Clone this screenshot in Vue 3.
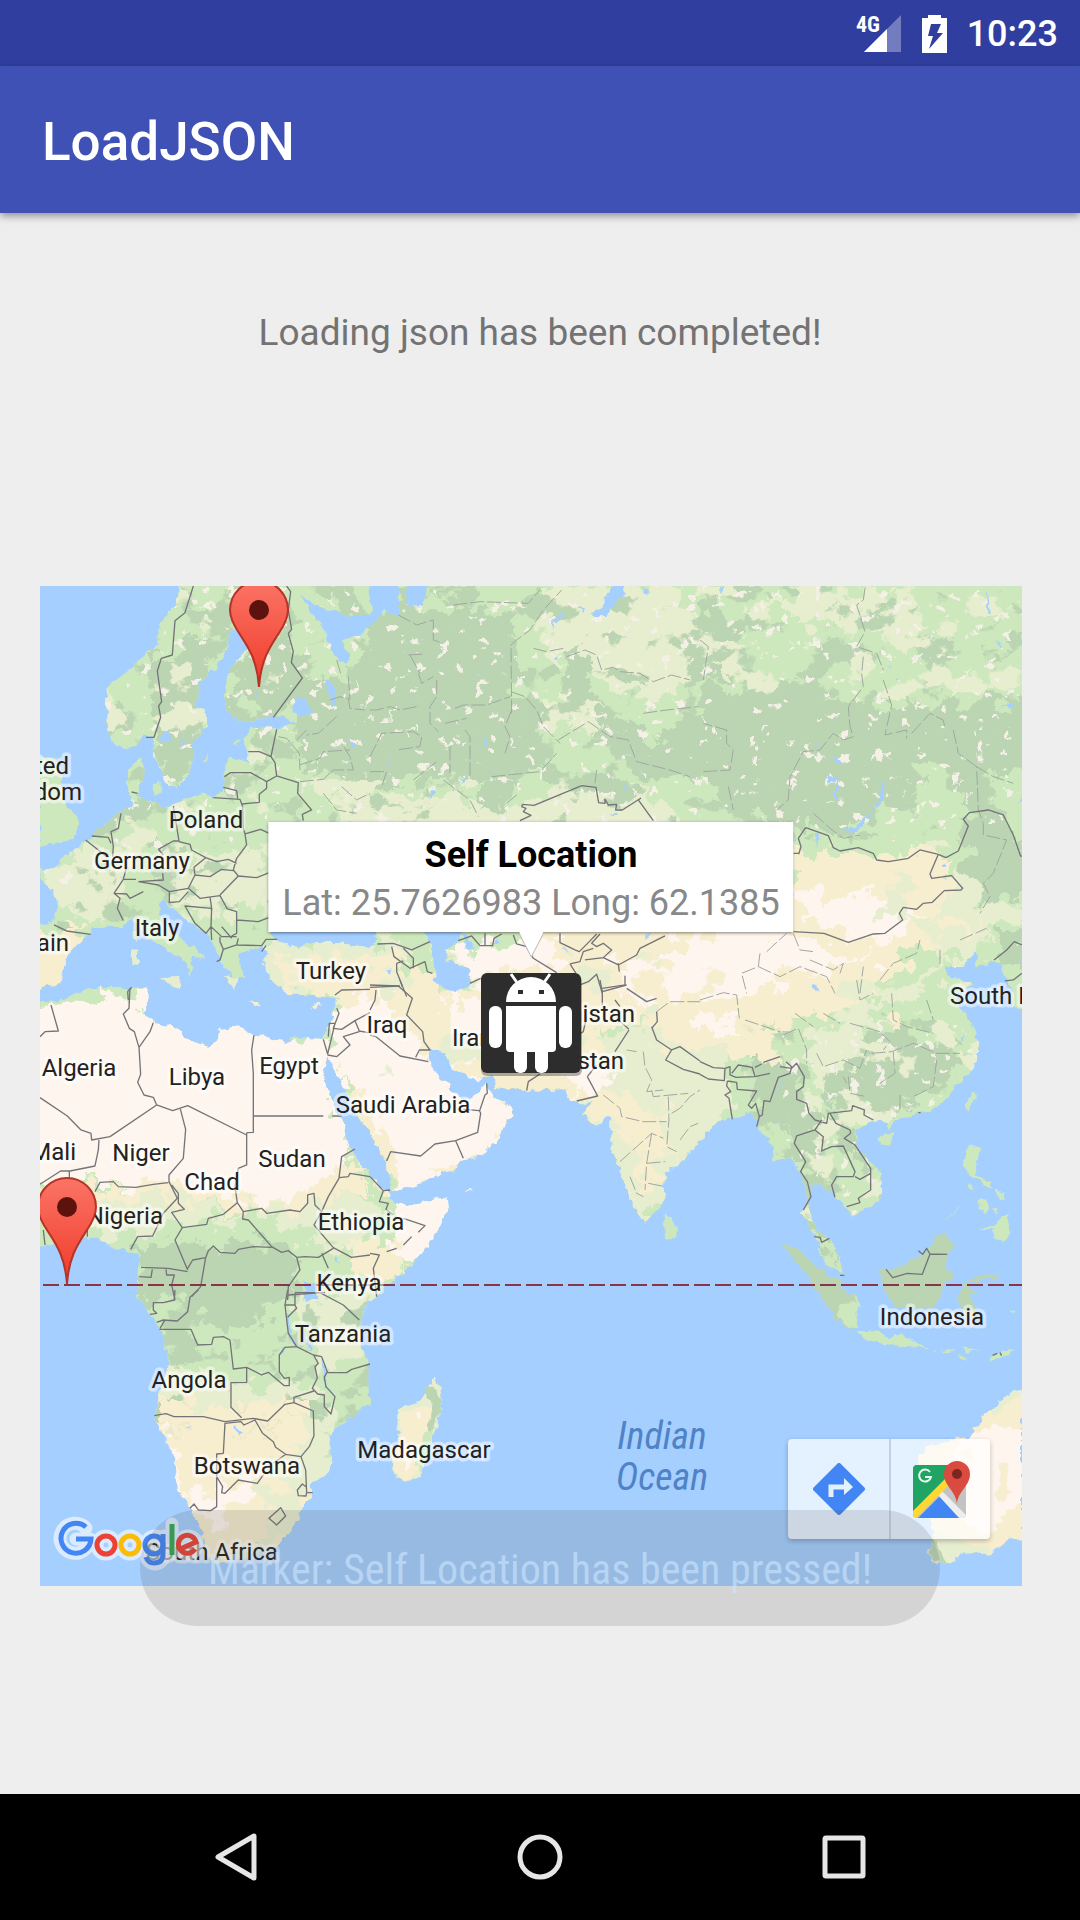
<script setup>
const eurasia = 'M178,580 177,603 160,623 157,643 133,667 107,687 106,697 108,727 110,742 123,749 137,745 145,735 153,740 155,760 163,773 165,783 175,787 187,777 193,760 193,740 207,727 207,713 197,707 198,683 217,667 227,650 229,633 240,625 262,630 243,653 227,673 225,710 240,723 270,717 283,715 295,723 280,727 253,728 243,737 247,747 248,763 237,760 230,757 223,770 225,787 213,798 200,793 183,800 170,807 150,802 138,795 140,787 145,767 142,757 128,770 128,787 133,807 118,810 110,820 95,833 83,843 60,860 55,870 40,868 40,878 57,897 58,910 53,923 30,925 30,992 58,983 70,950 90,935 93,927 122,927 132,917 137,927 153,943 173,953 187,963 188,977 193,967 192,957 205,958 183,940 168,927 158,913 163,900 173,908 183,917 207,933 215,947 220,963 233,977 245,977 237,957 247,950 262,948 270,953 263,960 270,980 287,993 317,995 335,998 333,1017 323,1038 328,1057 340,1080 360,1120 370,1133 380,1150 387,1167 392,1190 407,1188 457,1168 458,1160 477,1157 500,1138 502,1128 513,1115 507,1103 492,1097 487,1083 478,1093 470,1100 450,1093 450,1083 440,1080 427,1060 430,1050 440,1050 452,1067 477,1080 492,1075 495,1087 527,1091 565,1089 570,1100 583,1105 593,1102 583,1115 597,1127 607,1115 610,1120 612,1147 620,1170 633,1207 645,1224 663,1203 665,1173 680,1163 700,1140 718,1120 743,1117 753,1113 760,1130 773,1147 772,1163 790,1157 800,1170 808,1200 802,1213 817,1240 823,1260 843,1275 838,1250 828,1237 817,1230 810,1213 810,1193 812,1183 823,1187 833,1193 848,1210 852,1218 863,1210 882,1197 882,1173 857,1147 855,1133 873,1120 887,1120 890,1130 893,1122 940,1107 960,1083 977,1063 977,1033 963,1010 955,995 975,985 947,975 947,967 962,967 975,950 978,957 975,968 990,962 1002,963 1003,975 1012,988 1013,1008 1030,1005 1030,580Z'
const africa = 'M30,1005 60,1000 90,988 127,988 147,987 148,1005 143,1013 155,1023 178,1028 185,1038 207,1047 217,1040 218,1030 240,1027 253,1035 287,1042 307,1037 323,1038 328,1058 323,1077 333,1103 343,1123 347,1143 360,1163 370,1176 387,1193 395,1205 407,1205 447,1197 449,1207 437,1233 410,1267 387,1287 377,1295 368,1303 360,1320 362,1350 368,1363 369,1403 347,1420 327,1437 332,1457 330,1473 312,1483 312,1493 290,1533 270,1550 240,1560 213,1562 205,1553 203,1533 192,1510 178,1490 175,1457 160,1430 155,1417 160,1390 168,1370 167,1350 158,1327 150,1313 137,1298 137,1287 140,1263 137,1255 123,1248 112,1250 103,1240 87,1237 47,1245 30,1247Z'

// Painted in order, each over the one before it
const biomes = [
  { c: '#bbd5b3', d: 'M160,660 200,640 215,670 195,700 205,730 190,775 160,780 150,730 155,690Z M235,660 275,630 300,650 325,690 370,650 370,615 415,600 515,610 512,690 545,710 545,755 520,775 500,830 480,825 470,775 370,785 330,775 300,760 290,710 240,705Z M565,640 600,660 590,690 620,720 660,740 710,690 800,680 850,705 1030,700 1030,760 960,790 930,760 870,820 830,840 770,820 720,800 690,770 640,780 600,735 570,720Z M700,600 740,620 735,670 710,690 690,650Z' },
  { c: '#bbd5b3', d: 'M960,820 1000,810 1030,860 1030,900 990,900 965,890Z M750,1060 790,1060 810,1100 850,1120 880,1180 850,1150 820,1130 830,1260 845,1275 800,1210 795,1150 765,1110Z M830,1040 900,1020 920,1050 960,1040 950,1080 890,1110 840,1110 820,1080Z M990,960 1005,930 1030,940 1030,970Z M137,1250 200,1240 290,1245 298,1262 285,1300 260,1320 225,1330 190,1300 137,1300Z' },
  { c: '#e7eecf', d: 'M530,590 680,586 700,640 760,650 700,680 660,700 610,690 580,650 545,660Z M540,700 600,705 590,730 550,720Z M760,600 900,590 925,620 900,650 860,620 800,620Z M400,790 470,800 510,820 560,780 650,790 700,830 700,880 380,880 330,800Z M150,860 210,850 270,860 270,900 200,920 160,880Z' },
  { c: '#e7eecf', d: 'M60,860 130,850 120,900 90,925 60,900Z M260,945 330,940 400,940 400,1000 260,1000Z M560,1040 680,1020 740,1060 720,1130 650,1230 600,1150 570,1110Z M960,860 920,940 960,960 900,1010 860,1000 800,1050 820,1110 850,1060 880,1000 1000,930Z M30,1220 100,1195 165,1190 235,1215 320,1180 350,1190 370,1200 370,1260 330,1250 260,1212 180,1230 100,1240Z M150,1360 240,1390 300,1380 330,1420 345,1500 300,1540 270,1560 150,1500Z M300,1290 370,1290 370,1350 320,1370 300,1330Z' },
  { c: '#f7edcf', d: 'M30,930 90,930 60,990 30,990Z M275,955 400,955 440,990 560,960 600,1000 600,1110 540,1100 380,1040 340,1000 290,990Z M790,850 870,850 940,850 955,880 930,920 990,920 900,960 860,1010 770,1020 780,1060 740,1060 690,1050 640,1020 600,1020 560,1030 520,900 790,900Z M590,1090 640,1100 650,1130 630,1190 650,1180 640,1150 600,1120Z M30,1185 100,1190 165,1175 230,1195 320,1170 350,1150 360,1190 330,1200 300,1205 240,1210 165,1195 60,1210Z M350,1240 410,1240 400,1280 370,1290 350,1270Z M155,1395 190,1410 300,1400 310,1440 250,1470 270,1500 255,1560 200,1560 150,1420Z M340,1160 370,1165 370,1190Z M330,1040 400,1040 520,1090 520,1140 400,1210 360,1130Z' },
  { c: '#fef5ee', d: 'M30,1012 150,995 340,1035 340,1090 350,1160 310,1190 260,1205 230,1195 165,1180 100,1185 30,1180Z M325,1015 375,990 430,1050 510,1100 510,1140 400,1190 380,1130 345,1080Z M395,1180 470,1180 450,1230 410,1262 390,1235Z M440,950 560,940 560,965 520,975 470,985 450,960Z M600,970 700,935 780,930 870,965 890,890 900,930 860,960 790,990 700,995 640,1010Z M790,890 860,895 930,915 880,940 800,920Z M690,1010 740,1025 735,1035 690,1030Z M440,1000 490,1000 500,1050 450,1050Z M560,1070 610,1070 600,1095 570,1090Z M150,1415 175,1440 190,1500 160,1490Z M215,1480 260,1480 215,1530 190,1500Z' },
]

const tiles = [
  {
    x: 40, y: 580,
    land: [['#cee8bd', 'M0,530 50,535 65,600 80,680 112,710 115,740 100,780 40,790 0,798Z M335,610 358,605 360,640 345,645Z M580,490 602,480 590,500Z M488,545 505,515 500,545Z M275,1055 295,1050 290,1085Z'], ['#e7eecf', 'M360,1195 422,1190 415,1228Z M270,1110 295,1105 293,1158 275,1155Z M555,1190 590,1190 582,1232Z']],
    border: 'M460,18 435,98 405,122 397,225 364,235 352,273 365,365 356,378 362,412 342,472 318,472M740,18 752,35 745,90 755,148 745,160 760,215 754,247 787,294 700,412M710,448 693,530M625,515 658,515 693,530 705,548 710,588 775,608 773,640 815,690 787,703 790,722M553,590 572,578 632,578 680,605 710,588M680,605 680,625 658,643 658,667 605,672M550,622 590,632 593,655M520,653 600,658 608,680 610,745 615,762 620,795 590,835 580,870 595,888 540,945M400,678 417,783 400,783 355,808 370,825M417,785 450,793 455,810 497,833 530,845 565,838 590,850M497,833 462,862 465,885 445,925 388,935M465,885 510,890 545,868 580,872M615,762 662,748 688,760M595,888 650,893 688,878M445,925 480,955 540,947 562,987 590,995 590,1060 575,1068M388,935 388,968 418,965 445,935M510,950 515,985 435,978 465,1030 498,1060 513,1040 515,985M513,1040 545,1070 590,1070M545,1040 575,1075M590,1020 655,1025 688,1012M513,1040 515,1080M540,1070 540,1085 550,1108 590,1095 595,1075M550,1108 540,1140 530,1145M590,1095 665,1097 678,1078 712,1078M665,1115 678,1097M243,700 235,745 213,755 220,800 218,830M155,768 205,772 213,790M137,780 200,830M260,860 250,898 288,898M250,898 222,940 260,942 270,955 310,935M222,940 240,955 232,985 250,1022M295,905 370,900 368,880M295,905 355,915 388,935M42,1035 80,1053 152,1063M275,636 293,640M265,1260 263,1235 275,1222',
    thin: 'M715,470 740,475 778,520 780,570M778,555 840,535 850,515 930,510M770,480 800,450M890,410 835,460 800,465M870,360 900,350 925,355 930,385 975,390M780,605 850,598 880,570 940,570 930,530 905,490M850,640 890,690 950,700M905,620 950,660 990,640M890,240 905,290M925,290 930,360',
    water: 'M760,365 790,350 820,390 785,418 765,400Z M855,295 870,300 892,345 885,380 865,340Z M650,340 656,335 654,358Z M360,470 385,450 390,480 370,490Z M425,485 435,475 425,510Z M925,475 950,500 935,505Z',
  },
  {
    x: 370, y: 580,
    land: [],
    border: 'M450,722 483,706 460,695 468,685 455,680 458,673 492,676 635,617 678,622 686,668 705,670 705,657 715,675 740,673 737,690 757,690 812,655 805,660 850,722M22,1092 70,1090 125,1110 180,1085M65,1100 72,1130 120,1165 165,1145 172,1175 187,1180M100,1105 130,1135 130,1165M80,1150 80,1175 110,1250M80,1150 100,1143M265,1082 305,1068 330,1097 368,1097 372,1075 395,1062M345,1060 345,1095M430,1065 440,1092 470,1100 490,1135 560,1178M570,1060 570,1088 615,1110 628,1115 655,1088 680,1062M690,1062 665,1090 680,1100 700,1090 725,1110 700,1133 645,1140M600,1152 630,1145 640,1115 670,1105M600,1152 618,1180M700,1133 745,1155 800,1125 810,1105 885,1068M745,1150 748,1175M630,1215 655,1205 680,1183 697,1240M697,1225 765,1215 765,1187M300,1210 332,1195M0,1222 90,1218',
    thin: 'M250,75 330,65 475,70 510,30M115,225 165,222M120,225 150,280M425,400 423,195 440,180 480,150 520,90 575,30M423,335 465,350 500,390 520,440 570,490M490,205 530,215 580,205M590,230 645,210 680,225 695,270 730,262 750,275 810,280 850,305 905,285 960,300M85,105 140,135 190,120 190,180 220,190M145,280 155,310 190,290M200,300 200,350 180,380 180,430 205,455M0,390 20,390 60,380 90,390 150,378M255,385 280,375 350,375 420,350M0,530 35,460 130,455 155,470 150,500 80,510M225,430 290,415M285,450 300,470 300,590M425,390 405,440 420,470 405,520M365,590 510,575 560,520M565,480 655,425 720,470 775,480 800,545 900,570 960,590M820,400 890,390 985,380M0,575 50,575 35,620M130,600 200,545M240,500 240,580M220,600 300,660 325,710M410,670 440,645M680,570 675,610',
    water: 'M560,110 588,98 565,128Z M620,80 645,85 640,95Z M555,225 563,230 558,245Z M340,490 350,465 355,500Z M175,660 190,625 195,640Z M270,597 288,600 280,607Z M50,537 62,540 60,560Z M660,100 690,92 710,45 735,18 765,18 760,45 730,70 710,108 680,108Z M100,35 130,18 170,18 160,75 120,80Z M755,630 770,617 772,630Z M725,698 737,700 735,708Z M820,1060 845,1060 820,1073Z M370,1085 385,1072 385,1087Z M45,1172 68,1168 60,1185Z M820,18 845,40 825,35Z M575,1108 600,1110 585,1114Z M550,120 558,118 548,152Z',
  },
  {
    x: 700, y: 580,
    land: [],
    border: 'M280,820 297,820 303,800 295,775 317,743 385,767 400,803 420,813 475,803 520,820 530,840 565,845 625,835 660,810 715,823 738,833 775,813 805,738 790,718 808,698 865,690 910,705 940,765 962,828 975,830M715,823 690,882 695,895 755,887 788,925 783,930 733,932 697,967 670,970 650,988 610,982 598,1000 608,1020 555,1060 520,1062 445,1087 372,1060 280,1055M882,1140 920,1110 943,1085 966,1095M915,1203 940,1200 966,1180',
    thin: 'M495,25 490,60 470,75 495,155 470,200 530,220 550,270M490,230 485,280 490,320 445,380 450,440 460,470 430,480 400,460 360,510 310,515 270,590 265,660 230,690M550,300 575,375 555,465 620,450 620,475M635,460 690,400 730,420 735,445M760,450 775,520 830,560 835,690 850,730 850,765 920,780 880,880 850,910 870,950 840,1000M830,560 880,590 940,610M200,1115 260,1060 M280,1060 300,1110 340,1115M330,1140 400,1170 430,1150 420,1180M180,1120 175,1160 125,1180 140,1240M175,1160 240,1190 300,1160 380,1190 405,1240M10,575 90,570 100,510 80,490 80,450 10,430M85,620 100,690M340,700 390,745 430,775 480,765M480,1240 490,1160 M540,1200 580,1150 650,1120 660,1080M720,1110 720,1160M780,1080 860,1045M0,180 25,200 10,300',
    water: 'M550,600 560,605 545,660 500,720 465,757 430,757 480,730 525,680Z M400,525 430,545 415,552Z M380,590 410,588 415,665 405,660 405,600 385,612Z M345,758 358,765 348,800Z M345,495 357,480 350,500Z M857,18 862,50 870,100 862,98Z M885,170 912,203 900,195Z M890,392 930,372 952,373 920,382Z M337,1215 355,1220 352,1232 337,1230Z M725,860 735,842 735,858Z M568,258 576,262 574,272Z M588,298 598,295 596,310Z M960,1140 970,1140 970,1160Z M955,680 966,645 966,660Z M60,18 75,18 62,40Z',
  },
  {
    x: 40, y: 980,
    land: [['#f7edcf', 'M622,65 660,66 668,75 640,78Z M812,78 835,70 845,74 825,88Z'], ['#cee8bd', 'M750,175 800,172 790,198 770,192Z']],
    border: 'M270,25 267,85 250,102 268,145 283,155 297,202 302,283 293,307 312,345 340,352 350,375M297,202 330,155 340,128M350,375 398,392 443,377 620,465M350,375 210,470 155,480 153,460 123,450 82,408 0,353M33,75 55,153 15,155 0,170M420,383 437,448 430,535 387,585 387,605M620,458 620,555 595,565 585,620 592,668M642,165 635,210 640,280 640,457 620,458M640,408 850,408M877,408 905,408M177,480 175,510 165,558 90,573 62,573 0,613M88,575 88,600M165,635 180,607 220,605 235,620 287,622 340,613 385,608M387,605 412,655 370,700 338,768 293,770 272,808M395,615 415,640 415,670 433,688 395,697 427,743 500,733 505,715 550,703 592,668 610,695 608,717 625,720 695,800 725,817 745,812 770,832M427,743 405,780 443,870M443,865 458,840 497,833 505,812 520,798 540,817 585,820 595,808 640,800 695,802M497,833 482,920 455,950M303,862 385,865 443,875M298,890 333,892 337,868M378,868 380,885 403,885 395,915 405,960M610,695 665,685 680,700 750,690 780,695 803,670 803,645 822,640 825,675 845,695M845,695 865,650 897,595 905,530 945,507M897,593 925,590 930,580 990,590M845,695 822,735 880,803 935,832 990,825M770,832 795,830 835,832 880,805M770,832 780,870 745,920 743,960M845,820 865,865M745,945 855,937M885,45 905,30 990,28M890,85 897,100 880,145 905,148 945,122 990,98M945,122 958,153 985,158M850,178 863,222 885,130 868,130 865,170M863,225 890,230 930,195 910,170 958,155M10,750 15,795M142,740 142,770',
    thin: '',
    water: 'M885,820 895,835 900,855 888,845Z M795,910 830,905 830,950 795,945Z',
  },
  {
    x: 370, y: 980,
    land: [['#cee8bd', 'M885,700 905,715 923,760 905,778 885,775 882,730Z'], ['#fef5ee', 'M288,630 308,633 290,636Z']],
    border: 'M0,15 85,18 127,55 110,105 158,155 162,185 180,210 148,210 137,232M0,165 18,170 90,228 175,245M90,0 97,20M18,30 15,60 0,90M50,543 62,515 152,528 195,492 257,482 323,457 332,400 328,392 280,388M257,482 280,535M350,310 352,340 345,345 328,395M0,590 40,632 28,665 55,670 48,688 70,705M40,632 60,630M100,715 165,737 145,757M125,770 100,795M80,805 50,815M0,820 28,825 10,865 20,950M510,282 475,305 470,332M633,160 640,155 650,110M777,150 735,215M777,148 745,120M652,290 683,348 620,363M652,290 680,255M845,140 860,180 905,210 930,200 990,243M905,210 887,240 940,268 990,282M860,95 862,125 845,145M690,0 697,35 770,15M697,35 697,75M770,25 830,65 860,55M735,60 750,80',
    thin: 'M820,215 825,260 845,300 830,335 880,330M845,330 850,350 955,340M700,345 750,385 755,410 820,425 890,425M895,350 897,420 890,500 920,515M845,460 830,550 825,630M750,545 845,460 880,475M830,550 885,545M835,610 885,620M780,590 800,640 820,650M930,480 960,440 985,430M860,95 900,65 990,65M905,400 930,385 960,350 990,330M770,210 800,215',
    water: '',
  },
  {
    x: 700, y: 980,
    land: [
      ['#bbd5b3', 'M235,790 290,805 350,860 415,900 440,930 475,960 470,1040 450,1045 400,1010 350,935 320,880 290,850Z M545,870 590,860 650,835 690,800 720,760 735,765 770,800 740,825 745,870 760,890 735,910 715,970 690,985 640,985 590,980 555,940 545,900Z M790,905 830,890 898,882 890,895 830,905 800,912 820,935 850,930 810,950 845,1030 790,1000 775,960Z'],
      ['#cee8bd', 'M420,970 475,965 470,1040 445,1040 410,1000Z M805,492 843,505 835,545 825,590 870,605 880,625 840,605 805,590 790,560Z M890,630 912,640 910,665 895,655Z M835,660 860,655 865,700 845,690Z M805,612 820,615 818,632Z M880,685 888,680 890,705Z M840,745 880,740 920,700 935,755 910,785 880,770 880,750 845,750Z M733,725 780,675 775,685Z M795,380 815,335 828,345 808,400Z M535,475 550,460 583,460 570,495 545,498Z M460,950 485,970 490,980 465,970Z'],
    ],
    border: 'M0,245 40,263 75,265 90,260 90,285 108,292 165,290 157,262 115,255 95,280M0,283 25,297 73,302 75,265M165,262 185,252M190,247 240,230M165,290 210,280M82,303 80,318 92,335 75,345 87,355 97,418M82,303 110,307 112,328 170,333 145,375 155,385 167,370 178,410 170,440M178,410 187,405 192,362 210,365 235,292 270,280 275,260 258,245M240,260 275,265 290,250 313,290 310,320 290,335 290,358 320,370 327,400 345,420 380,430 385,400 455,392 458,377 493,390 492,405 520,420M365,420 345,450 290,468 283,490 317,545 302,575 322,605 333,650 310,690M345,450 370,470 365,513 395,500 430,498 465,575 460,590 410,590 395,615 405,652M390,400 408,430 450,450 452,460 433,475 465,495 512,565 512,630 475,655 480,668 440,680M465,590 480,598 512,580M343,770 360,772 365,787 388,775M558,868 578,893 622,880 667,883 690,822 742,823M655,812 668,823 680,805 690,822M420,886 433,886M655,398 662,398',
    thin: 'M0,60 70,38 110,45 118,115M135,120 240,155M250,165 295,145 320,210 320,250M285,100 340,140M350,220 370,260 430,240 480,265 500,210M575,40 580,120 620,140 700,160M450,130 540,155 570,185 550,210M515,220 575,215 640,190 710,220 780,220M580,215 585,280 540,310M445,290 450,340 500,350M600,345 600,390M680,60 700,120M710,240 700,320 640,350M370,100 420,130M430,290 440,310M470,0 480,60 520,40',
    water: 'M225,440 240,415 235,430Z M230,330 255,300 240,325Z M790,165 797,180 790,180Z',
  },
  {
    x: 40, y: 1290,
    land: [],
    border: 'M405,0 403,30 370,38 340,38 340,60 350,70 330,73M475,0 450,22 443,65 412,93 370,90 350,97M360,115 375,90M358,118 453,118 473,165 515,163 520,142 550,140 570,150 580,237 620,232 620,277 573,278 573,352 605,383M620,232 665,255 685,247 733,287 748,287 748,262 733,265 718,245 718,195 735,172 770,170M743,0 735,45 745,130 770,170 820,195 845,200M765,10 765,45 770,55 743,82M733,45 765,45M765,8 840,8 910,45 958,90M860,247 920,248 935,238 990,222M845,200 862,245 853,262 858,290 885,320 873,372 853,350 853,315 833,312 817,295 832,265 825,230 835,220 822,198M762,337 762,322 822,303M343,377 378,371 402,380 490,380 555,395 640,385 683,393 735,343 762,338 820,363 822,437 808,470 783,500 737,493 707,472 700,455 668,430 645,390 612,405 603,395 555,400 550,490 530,492 530,650 512,662 475,660 462,642 450,655M530,560 548,590 545,608 555,610 595,570 652,580 670,555M700,520 737,493M783,500 797,540 800,608 818,608M800,608 798,618 775,617 772,600 787,582 800,592M687,685 722,653 737,678 710,705Z',
    thin: '',
    water: 'M437,415 458,407 450,418Z M580,410 610,425 600,440Z M735,70 742,75 750,130 770,165 762,165 742,130Z M845,205 855,225 858,290 882,318 850,270Z M790,0 830,0 832,25 795,40Z M780,130 820,170 810,178Z M722,178 735,172 718,200Z',
  },
  {
    x: 370, y: 1290,
    land: [['#e7eecf', 'M190,265 210,290 217,335 200,400 170,500 150,560 105,575 75,560 65,510 90,430 75,390 90,355 140,340 165,310Z'], ['#f7edcf', 'M85,370 150,350 185,350 170,420 140,510 140,550 105,572 78,555 70,510 95,440Z'], ['#bbd5b3', 'M168,290 195,290 217,335 205,370 190,410 168,450 188,340 165,310Z'], ['#cee8bd', 'M165,425 190,420 170,500 150,545 140,525Z'], ['#fef5ee', 'M110,505 130,520 110,545 103,530Z M137,370 158,360 155,385Z']],
    border: '', thin: '', water: '',
  },
  {
    x: 700, y: 1290,
    land: [
      ['#cee8bd', 'M470,122 530,125 570,145 600,133 645,150 630,155 662,160 690,175 660,172 560,163 500,150Z M718,180 765,176 730,188Z M790,173 848,180 800,185Z M775,198 798,203 800,215Z M865,215 880,190 945,178 900,205Z M930,60 950,62 940,70Z M700,180 712,178 705,185Z'],
      ['#f7edcf', 'M966,310 950,300 905,325 880,365 850,370 840,400 820,430 770,450 700,465 660,490 652,520 680,590 685,680 705,740 680,795 710,820 745,822 790,790 870,790 920,750 966,745Z'],
      ['#e7eecf', 'M966,300 945,302 905,325 875,375 895,372 930,335 966,312Z M700,735 760,740 820,765 870,770 865,792 790,790 745,822 705,815 680,795Z'],
      ['#fef5ee', 'M966,420 880,405 820,430 780,450 740,520 770,560 790,640 740,650 800,700 850,740 890,720 966,680Z'],
      ['#f7edcf', 'M895,515 925,520 920,590 935,610 900,640 885,620 905,570Z M900,680 966,640 966,700 910,735 890,715Z M780,480 820,475 815,520 790,500Z'],
      ['#bbd5b3', 'M700,730 712,770 745,822 720,820 685,795Z'],
    ],
    border: 'M878,196 892,190M900,188 905,197', thin: '', water: '',
  },
]

const labels = [
  ['United', 69, 774, 'end'], ['Kingdom', 82, 800, 'end'], ['Poland', 206, 828], ['Germany', 142, 869],
  ['Italy', 157, 936], ['Spain', 69, 951, 'end'], ['Turkey', 331, 979], ['Algeria', 79, 1076],
  ['Libya', 197, 1085], ['Egypt', 289, 1074], ['Iraq', 387, 1033], ['Iran', 452, 1046, 'start'],
  ['Afghanistan', 635, 1022, 'end'], ['Pakistan', 624, 1069, 'end'], ['South Korea', 950, 1004, 'start'],
  ['Saudi Arabia', 403, 1113], ['Mali', 76, 1160, 'end'], ['Niger', 141, 1161], ['Sudan', 292, 1167],
  ['Chad', 212, 1190], ['Nigeria', 163, 1224, 'end'], ['Ethiopia', 361, 1230], ['Kenya', 349, 1291],
  ['Tanzania', 343, 1342], ['Angola', 189, 1388], ['Botswana', 247, 1474], ['Madagascar', 424, 1458],
  ['South Africa', 212, 1560], ['Indonesia', 932, 1325],
]

const pins = [[259, 687], [67, 1284]]
</script>

<template>
  <div class="screen">
    <header class="status">
      <svg class="signal" width="46" height="40" viewBox="0 0 46 40" aria-label="4G signal">
        <path d="M45,1V38H8Z" fill="#fff" opacity=".32" />
        <path d="M31,15V38H8Z" fill="#fff" />
        <text x="0" y="18">4G</text>
      </svg>
      <svg width="25" height="38" viewBox="0 0 25 38" aria-label="Charging">
        <path fill="#fff" fill-rule="evenodd" d="M6,0H19V3H25V38H0V3H6ZM9,9 6,21H11L7,34 21,18H15L19,9Z" />
      </svg>
      <time>10:23</time>
    </header>
    <div class="appbar"><h1>LoadJSON</h1></div>

    <main>
      <p class="message">Loading json has been completed!</p>

      <section class="map">
        <svg class="canvas" viewBox="40 586 982 1000" role="img" aria-label="Map">
          <defs>
            <clipPath id="land"><path :d="eurasia" /><path :d="africa" /></clipPath>
            <filter id="rough" x="-5%" y="-5%" width="110%" height="110%">
              <feTurbulence type="fractalNoise" baseFrequency=".05" numOctaves="4" seed="4" />
              <feDisplacementMap in="SourceGraphic" scale="48" xChannelSelector="R" yChannelSelector="G" />
            </filter>
            <filter id="coast" x="-2%" y="-2%" width="104%" height="104%">
              <feTurbulence type="fractalNoise" baseFrequency=".12" numOctaves="2" seed="9" />
              <feDisplacementMap in="SourceGraphic" scale="8" xChannelSelector="R" yChannelSelector="G" />
            </filter>
            <filter id="speckle-a" color-interpolation-filters="sRGB">
              <feTurbulence type="fractalNoise" baseFrequency=".025 .03" numOctaves="5" seed="11" />
              <feColorMatrix values="0 0 0 0 0 0 0 0 0 0 0 0 0 0 0 24 0 0 0 -13.8" />
              <feComposite in="SourceGraphic" operator="in" />
            </filter>
            <filter id="speckle-b" color-interpolation-filters="sRGB">
              <feTurbulence type="fractalNoise" baseFrequency=".025 .03" numOctaves="5" seed="27" />
              <feColorMatrix values="0 0 0 0 0 0 0 0 0 0 0 0 0 0 0 24 0 0 0 -14.4" />
              <feComposite in="SourceGraphic" operator="in" />
            </filter>
            <filter id="speckle-c" color-interpolation-filters="sRGB">
              <feTurbulence type="fractalNoise" baseFrequency=".08" numOctaves="3" seed="5" />
              <feColorMatrix values="0 0 0 0 0 0 0 0 0 0 0 0 0 0 0 24 0 0 0 -16.4" />
              <feComposite in="SourceGraphic" operator="in" />
            </filter>
            <linearGradient id="pin" x1="0" y1="0" x2="0" y2="1">
              <stop offset="0" stop-color="#fb7466" /><stop offset="1" stop-color="#f03a28" />
            </linearGradient>
          </defs>

          <rect x="40" y="586" width="982" height="1000" fill="#a5cfff" />

          <g filter="url(#coast)">
            <g clip-path="url(#land)">
              <rect x="20" y="570" width="1020" height="1020" fill="#cee8bd" />
              <g filter="url(#rough)">
                <path v-for="(b, i) in biomes" :key="i" :d="b.d" :fill="b.c" />
              </g>
              <path filter="url(#speckle-a)" fill="#bbd5b3" d="M40,586H1022V840L780,840 500,830 270,930 40,930Z M740,1020H990V1280H740Z M150,1290H380V1440H150Z" />
              <path filter="url(#speckle-b)" fill="#e7eecf" d="M40,586H280V930H40Z M540,586H1022V700L900,700 640,690 560,640Z M300,780H500V860H300Z M840,980H990V1220H790V1180Z M270,930H440V980H270Z" />
              <path filter="url(#speckle-c)" fill="#f4f0e6" d="M100,586H1022V830H270L40,900V800Z M770,1020H990V1220H790Z" />
              <path filter="url(#speckle-a)" fill="#f7edcf" d="M560,960H900V1030H560Z M590,1080H680V1200H600Z M160,1400H310V1550H160Z" />
              <path filter="url(#speckle-b)" fill="#e7eecf" d="M380,940H660V1080H380Z M900,840H1022V960H860Z" />
            </g>
            <path fill="#a5cfff" d="M300,595 320,608 353,617 372,613 370,580 398,580 398,615 385,610 370,625 360,635 343,640 350,660 345,665 330,650 325,630 310,610Z M269,900H377V940L370,948 340,942 317,942 290,947 270,935Z M423,930 462,930 458,943 445,950 448,960 468,968 470,985 453,992 435,983 433,953 428,940Z M463,933 475,948 467,950Z" />
            <g v-for="t in tiles" :key="'l' + t.x + '-' + t.y" :transform="`translate(${t.x} ${t.y}) scale(.3333)`">
              <path v-for="(l, i) in t.land" :key="i" :fill="l[0]" :d="l[1]" />
              <path fill="#a5cfff" :d="t.water" />
            </g>
          </g>

          <g v-for="t in tiles" :key="'b' + t.x + '-' + t.y" :transform="`translate(${t.x} ${t.y}) scale(.3333)`" fill="none">
            <path :d="t.thin" stroke="#a0a8a0" stroke-width="3" stroke-dasharray="42 9" />
            <path :d="t.border" stroke="#747478" stroke-width="4" stroke-linejoin="round" />
          </g>

          <path d="M43,1285H1022" stroke="#8c3348" stroke-width="2" stroke-dasharray="16 5" />

          <g class="labels">
            <text v-for="l in labels" :key="l[0]" :x="l[1]" :y="l[2]" :text-anchor="l[3] || 'middle'">{{ l[0] }}</text>
          </g>
          <g class="ocean">
            <text x="662" y="1449">Indian</text>
            <text x="662" y="1490">Ocean</text>
          </g>

          <g v-for="p in pins" :key="p[0]" :transform="`translate(${p[0]} ${p[1]})`">
            <path d="M0,0 C-2,-28 -11,-40 -20,-54 C-26,-63 -29,-69 -29,-77 A29,29 0 0 1 29,-77 C29,-69 26,-63 20,-54 C11,-40 2,-28 0,0Z" fill="url(#pin)" stroke="#b53428" stroke-width="2" />
            <circle cy="-77" r="10" fill="#5c130d" />
          </g>

          <g>
            <rect x="481" y="975" width="101" height="101" rx="6" opacity=".3" />
            <rect x="481" y="973" width="100" height="100" rx="6" fill="#2d2d2d" />
            <g fill="#fff">
              <path d="M506,1002A25,25 0 0 1 556,1002Z M506,1006H556V1048Q556,1052 552,1052H510Q506,1052 506,1048Z" />
              <rect x="489" y="1006" width="13" height="42" rx="6" />
              <rect x="559" y="1006" width="13" height="42" rx="6" />
              <rect x="514" y="1044" width="13" height="29" rx="6" />
              <rect x="535" y="1044" width="13" height="29" rx="6" />
              <path d="M511,974 518,984M550,974 543,984" stroke="#fff" stroke-width="3" />
            </g>
            <path d="M518,990h5v4h-5zM539,990h5v4h-5z" fill="#2d2d2d" />
          </g>

          <g fill="none" stroke-width="5" aria-label="Google">
            <g stroke="#fff" stroke-width="13" opacity=".6" stroke-linecap="round" stroke-linejoin="round">
              <path d="M86,1528A15,15 0 1 0 90,1539H76M172,1524V1554M164,1536V1556A9,9 0 0 1 147,1559M180,1548 196,1541" />
              <circle cx="106" cy="1545" r="9" /><circle cx="130" cy="1545" r="9" /><circle cx="155" cy="1545" r="9" /><circle cx="188" cy="1545" r="9" />
            </g>
            <path d="M86,1527A15,15 0 1 0 91,1539H76" stroke="#4285f4" />
            <circle cx="106" cy="1545" r="9" stroke="#ea4335" />
            <circle cx="130" cy="1545" r="9" stroke="#fbbc05" />
            <g stroke="#4285f4"><circle cx="154" cy="1545" r="9" /><path d="M163,1534V1554Q163,1563 154,1563 148,1563 146,1557" /></g>
            <path d="M172,1524V1555" stroke="#34a853" />
            <path d="M180,1549 196,1542A9,9 0 1 0 195,1549" stroke="#ea4335" />
          </g>
        </svg>

        <div class="info">
          <strong>Self Location</strong>
          <span>Lat: 25.7626983 Long: 62.1385</span>
          <svg class="tail" width="24" height="26" viewBox="0 0 24 26"><path d="M0,0 12,25 24,0Z" fill="#fff" /><path d="M0,2 12,25 24,2" fill="none" stroke="#bbb" /></svg>
        </div>

        <div class="tools">
          <button type="button" aria-label="Directions">
            <svg width="52" height="52" viewBox="0 0 52 52">
              <path d="M26,2 50,26 26,50 2,26Z" fill="#4285f4" stroke="#4285f4" stroke-width="4" stroke-linejoin="round" />
              <path d="M18,34V24H34" fill="none" stroke="#e3f1ff" stroke-width="5" /><path d="M31,15 40,24 31,32Z" fill="#e3f1ff" />
            </svg>
          </button>
          <button type="button" aria-label="Open in Maps">
            <svg width="58" height="58" viewBox="0 0 58 58">
              <clipPath id="tile"><rect x="1" y="5" width="53" height="53" rx="4" /></clipPath>
              <g clip-path="url(#tile)">
                <rect width="58" height="58" fill="#c3c3c3" />
                <path d="M0,0H48V10L0,58Z" fill="#1fa463" />
                <path d="M28,36 54,62H2Z" fill="#4285f4" />
                <path d="M25,34 29,30 58,59 48,59Z" fill="#eee" />
                <path d="M0,52 40,12 44,18 2,60Z" fill="#fdd835" />
              </g>
              <path d="M18,12A6,6 0 1 0 19,17H13" fill="none" stroke="#eef8f2" stroke-width="2" />
              <path d="M45,44C44,31 32,26 32,14A13,13 0 0 1 58,14C58,26 46,31 45,44Z" fill="#db4a3e" />
              <circle cx="45" cy="14" r="5" fill="#7c2620" />
            </svg>
          </button>
        </div>

        <div class="toast" role="status">Marker: Self Location has been pressed!</div>
      </section>
    </main>

    <nav class="navbar">
      <button type="button" aria-label="Back"><svg width="50" height="50" viewBox="0 0 50 50"><path d="M43,4V46L7,25Z" /></svg></button>
      <button type="button" aria-label="Home"><svg width="50" height="50" viewBox="0 0 50 50"><circle cx="25" cy="25" r="20" /></svg></button>
      <button type="button" aria-label="Recents"><svg width="50" height="50" viewBox="0 0 50 50"><rect x="6" y="6" width="38" height="38" rx="1" /></svg></button>
    </nav>
  </div>
</template>

<style>
body { margin: 0; background: #eee; }
</style>

<style scoped>
.screen { display: flex; flex-direction: column; min-height: 100vh; background: #eee; font-family: Roboto, "Liberation Sans", sans-serif; }
button { padding: 0; border: 0; background: none; display: flex; align-items: center; justify-content: center; }
.status { box-sizing: border-box; height: 66px; padding: 2px 22px 0; background: #303f9f; color: #fff; display: flex; align-items: center; justify-content: flex-end; gap: 20px; }
.status time { font-size: 36px; line-height: 40px; font-weight: 500; }
.signal text { fill: #fff; font: 700 22px "Roboto Condensed", Roboto, sans-serif; }
.appbar { box-sizing: border-box; height: 147px; padding: 4px 42px 0; background: #3f51b5; display: flex; align-items: center; box-shadow: 0 3px 8px rgba(0, 0, 0, .4); }
.appbar h1 { margin: 0; color: #fff; font-size: 53px; line-height: 60px; font-weight: 500; }
main { flex: 1; padding: 98px 58px 40px 40px; }
.message { margin: 0 -18px 231px 0; text-align: center; color: #737373; font-size: 37px; line-height: 44px; }
.map { position: relative; }
.canvas { display: block; width: 100%; height: auto; }
.labels text { font: 24px Roboto, sans-serif; fill: #222; stroke: rgba(255, 255, 255, .5); stroke-width: 7px; stroke-linejoin: round; paint-order: stroke; }
.ocean text { font: italic 38px "Roboto Condensed", Roboto, sans-serif; fill: #4f82c6; text-anchor: middle; }
.info { position: absolute; left: 50%; top: 236px; transform: translateX(-50%); padding: 9px 14px 5px; background: #fff; box-shadow: 0 1px 3px rgba(0, 0, 0, .5); display: flex; flex-direction: column; align-items: center; white-space: nowrap; font-size: 36px; line-height: 48px; color: #888; }
.info strong { color: #000; }
.tail { position: absolute; left: 50%; top: 100%; margin-left: -12px; }
.tools { position: absolute; right: 32px; bottom: 47px; display: flex; border-radius: 4px; background: rgba(255, 255, 255, .7); box-shadow: 0 2px 5px rgba(0, 0, 0, .25); }
.tools button { width: 101px; height: 100px; }
.tools button + button { border-left: 2px solid rgba(120, 140, 160, .3); }
.toast { position: absolute; left: 100px; right: 82px; top: calc(100% - 76px); box-sizing: border-box; height: 116px; padding-top: 2px; border-radius: 58px; background: rgba(80, 80, 80, .16); display: flex; align-items: center; justify-content: center; color: rgba(205, 230, 255, .6); font: 42px "Roboto Condensed", Roboto, sans-serif; white-space: nowrap; }
.navbar { height: 126px; padding: 0 84px; background: #000; display: flex; }
.navbar button { flex: 1; }
.navbar svg { fill: none; stroke: #e6e6e6; stroke-width: 5; stroke-linejoin: round; }
</style>
